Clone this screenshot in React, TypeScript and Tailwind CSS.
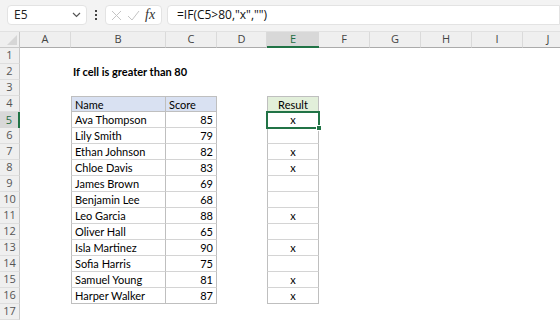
import React from "react"

const COLS = [
  { k: "A", w: 51 },
  { k: "B", w: 95 },
  { k: "C", w: 51 },
  { k: "D", w: 50 },
  { k: "E", w: 52 },
  { k: "F", w: 51 },
  { k: "G", w: 51 },
  { k: "H", w: 51 },
  { k: "I", w: 51 },
  { k: "J", w: 51 },
]

const DATA: [string, number][] = [
  ["Ava Thompson", 85],
  ["Lily Smith", 79],
  ["Ethan Johnson", 82],
  ["Chloe Davis", 83],
  ["James Brown", 69],
  ["Benjamin Lee", 68],
  ["Leo Garcia", 88],
  ["Oliver Hall", 65],
  ["Isla Martinez", 90],
  ["Sofia Harris", 75],
  ["Samuel Young", 81],
  ["Harper Walker", 87],
]

const cellFont = { fontFamily: "Lato, 'Open Sans', sans-serif" }

const FormulaBar = () => (
  <div className="h-[32px] bg-[#f3f3f3] flex items-start pt-[5px] pl-[7px] border-b border-[#e1e1e1]">
    <div className="w-[80px] h-[20px] bg-white rounded-[4px] border border-[#e3e3e3] flex items-center justify-between pl-[6px] pr-[5px] text-[12px] text-[#222]">
      <span style={{ fontFamily: "'Open Sans', sans-serif" }}>E5</span>
      <svg width="9" height="6" viewBox="0 0 9 6">
        <path d="M1 1l3.5 3.5L8 1" fill="none" stroke="#555" strokeWidth="1.2" />
      </svg>
    </div>
    <div className="w-[18px] h-[20px] flex flex-col items-center justify-center gap-[2px]">
      <span className="w-[2px] h-[2px] bg-[#444]" />
      <span className="w-[2px] h-[2px] bg-[#444]" />
      <span className="w-[2px] h-[2px] bg-[#444]" />
    </div>
    <div className="w-[57px] h-[20px] bg-white rounded-[4px] border border-[#e3e3e3] flex items-center pl-[5px] gap-[5px]">
      <svg width="11" height="11" viewBox="0 0 11 11">
        <path d="M1 1l9 9M10 1l-9 9" stroke="#c4c4c4" strokeWidth="1" />
      </svg>
      <svg width="13" height="11" viewBox="0 0 13 11">
        <path d="M1 6l4 4 7-9" fill="none" stroke="#c4c4c4" strokeWidth="1" />
      </svg>
      <span
        className="italic text-[14px] text-[#333] leading-none"
        style={{ fontFamily: "'Liberation Serif', serif" }}
      >
        fx
      </span>
    </div>
    <div
      className="ml-[5px] flex-1 h-[20px] bg-white rounded-l-[4px] border border-[#e3e3e3] flex items-center pl-[9px] text-[12px] text-[#111]"
      style={{ fontFamily: "'Open Sans', sans-serif" }}
    >
      =IF(C5&gt;80,"x","")
    </div>
  </div>
)

const HeaderRow = () => (
  <div className="flex h-[16px] bg-[#efefef]" style={{ fontFamily: "'Open Sans', sans-serif" }}>
    <div className="w-[20px] shrink-0 relative border-r border-b border-[#c8c8c8]">
      <div className="absolute right-[2px] bottom-[2px] w-0 h-0 border-l-[10px] border-l-transparent border-b-[10px] border-b-[#d6d6d6]" />
    </div>
    {COLS.map((c) => (
      <div
        key={c.k}
        style={{ width: c.w }}
        className={
          c.k === "E"
            ? "shrink-0 flex items-center justify-center text-[11px] text-[#1e6e42] bg-[#d8d8d8] border-b-2 border-[#217346]"
            : "shrink-0 flex items-center justify-center text-[11px] text-[#444] border-r border-[#dadada] border-b border-b-[#ababab]"
        }
      >
        {c.k}
      </div>
    ))}
  </div>
)

const RowHead = ({ n }: { n: number }) => (
  <div
    className={
      n === 5
        ? "w-[20px] shrink-0 flex items-center justify-center text-[11px] text-[#1e6e42] bg-[#d8d8d8] border-r-2 border-[#217346]"
        : "w-[20px] shrink-0 flex items-center justify-center text-[11px] text-[#555] bg-[#efefef] border-r border-[#c8c8c8] border-b border-b-[#dedede]"
    }
    style={{ fontFamily: "'Open Sans', sans-serif" }}
  >
    {n}
  </div>
)

const Row = ({ n }: { n: number }) => {
  const idx = n - 5
  const item = idx >= 0 && idx < DATA.length ? DATA[idx] : null
  const isHead = n === 4
  const last = n === 16

  return (
    <div className="flex h-[16px] text-[11px] text-black" style={cellFont}>
      <RowHead n={n} />
      <div className="w-[51px] shrink-0" />
      {n === 2 ? (
        <div className="w-[196px] shrink-0 pl-[2px] font-bold leading-[16px] whitespace-nowrap">
          If cell is greater than 80
        </div>
      ) : isHead || item ? (
        <>
          <div
            className={`w-[95px] shrink-0 pl-[3px] leading-[15px] border-l border-r border-[#bfbfbf] ${
              isHead ? "bg-[#d9e1f2] border-t" : ""
            } ${last || isHead ? "border-b" : "border-b border-b-[#d4d4d4]"}`}
          >
            {isHead ? "Name" : item![0]}
          </div>
          <div
            className={`w-[51px] shrink-0 leading-[15px] border-r border-[#bfbfbf] ${
              isHead ? "bg-[#d9e1f2] border-t pl-[3px]" : "text-right pr-[3px]"
            } ${last || isHead ? "border-b" : "border-b border-b-[#d4d4d4]"}`}
          >
            {isHead ? "Score" : item![1]}
          </div>
          <div className="w-[50px] shrink-0" />
          <div
            className={`w-[52px] shrink-0 text-center leading-[15px] border-l border-r border-[#bfbfbf] ${
              isHead ? "bg-[#e2efda] border-t" : ""
            } ${last || isHead ? "border-b" : "border-b border-b-[#d4d4d4]"}`}
          >
            {isHead ? "Result" : item![1] > 80 ? "x" : ""}
          </div>
        </>
      ) : null}
    </div>
  )
}

export default function App() {
  const rows = Array.from({ length: 17 }, (_, i) => i + 1)
  return (
    <div className="w-[560px] h-[320px] overflow-hidden bg-white relative">
      <FormulaBar />
      <HeaderRow />
      {rows.map((n) => (
        <Row key={n} n={n} />
      ))}
      {/* active cell E5 */}
      <div className="absolute left-[266px] top-[111px] w-[54px] h-[18px] border-2 border-[#217346]">
        <div className="absolute right-[-4px] bottom-[-4px] w-[6px] h-[6px] bg-[#217346] border border-white" />
      </div>
    </div>
  )
}
